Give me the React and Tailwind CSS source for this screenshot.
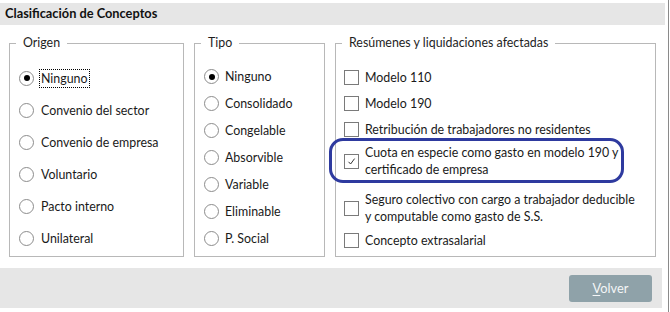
import React from 'react';

const origen = ['Ninguno', 'Convenio del sector', 'Convenio de empresa', 'Voluntario', 'Pacto interno', 'Unilateral'];
const tipo = ['Ninguno', 'Consolidado', 'Congelable', 'Absorvible', 'Variable', 'Eliminable', 'P. Social'];

function Radio({ checked }) {
  return (
    <span className="w-[15px] h-[15px] rounded-full border border-[#8c8c8c] bg-white flex items-center justify-center shrink-0">
      {checked && <span className="w-[6px] h-[6px] rounded-full bg-black" />}
    </span>
  );
}

function Check({ checked }) {
  return (
    <span className="w-[15px] h-[15px] border border-[#7a7a7a] bg-white flex items-center justify-center shrink-0">
      {checked && (
        <svg width="9" height="9" viewBox="0 0 9 9">
          <path d="M1.5 4.8 L3.6 7 L7.6 1.6" fill="none" stroke="#333" strokeWidth="1" />
        </svg>
      )}
    </span>
  );
}

function Group({ title, width, children }) {
  return (
    <div className={`${width} h-[214px] border border-[#b8b8b8] shrink-0`}>
      <div className="-mt-[10px] ml-[6px] px-[7px] bg-white w-fit leading-[17px] text-[#1e1e1e] whitespace-nowrap">{title}</div>
      {children}
    </div>
  );
}

export default function App() {
  return (
    <div className="w-[670px] h-[312px] bg-white font-['Lato',sans-serif] text-[12.4px] text-[#1a1a1a] relative whitespace-nowrap">
      <div className="w-[669px] h-full border-r border-[#8a8a8a] flex flex-col">
        <div className="pt-[3px] pr-[3px]">
          <div className="h-[22px] bg-[#e6e6e6] flex items-center pl-[5px] font-bold text-[12.8px] text-[#111]">
            Clasificación de Conceptos
          </div>
        </div>

        <div className="flex gap-[10px] pl-[9px] pt-[18px] h-[243px]">
          <Group title="Origen" width="w-[175px]">
            <div className="pt-[11px] pl-[9px]">
              {origen.map((o, i) => (
                <div key={o} className="h-[32px] flex items-center gap-[6px] leading-[17px]">
                  <Radio checked={i === 0} />
                  <span className={i === 0 ? 'outline outline-1 outline-dotted outline-black px-[1px]' : 'px-[1px]'}>{o}</span>
                </div>
              ))}
            </div>
          </Group>

          <Group title="Tipo" width="w-[131px]">
            <div className="pt-[12px] pl-[9px]">
              {tipo.map((t, i) => (
                <div key={t} className="h-[27px] flex items-center gap-[6px] leading-[17px]">
                  <Radio checked={i === 0} />
                  <span>{t}</span>
                </div>
              ))}
            </div>
          </Group>

          <Group title="Resúmenes y liquidaciones afectadas" width="w-[321px]">
            <div className="pt-[18px] pl-[8px] flex flex-col gap-[9px] leading-[17px]">
              <div className="flex items-center gap-[6px]"><Check /><span>Modelo 110</span></div>
              <div className="flex items-center gap-[6px]"><Check /><span>Modelo 190</span></div>
              <div className="flex items-center gap-[6px]"><Check /><span>Retribución de trabajadores no residentes</span></div>
              <div className="flex items-center gap-[6px] -mt-[3px]"><Check checked /><span>Cuota en especie como gasto en modelo 190 y<br />certificado de empresa</span></div>
              <div className="flex items-center gap-[6px] mt-[4px]"><Check /><span>Seguro colectivo con cargo a trabajador deducible<br />y computable como gasto de S.S.</span></div>
              <div className="flex items-center gap-[6px] -mt-[2px]"><Check /><span>Concepto extrasalarial</span></div>
            </div>
          </Group>
        </div>

        <div className="h-[40px] mr-[6px] bg-[#e6e6e6] flex items-center justify-end pr-[10px] pt-[1px]">
          <button className="w-[83px] h-[27px] rounded-[3px] bg-[#8fa2a9] text-[#f4f6f7] text-[12.8px] leading-none">
            <span className="underline underline-offset-2">V</span>olver
          </button>
        </div>
      </div>

      <div className="absolute left-[329px] top-[138px] w-[295px] h-[45px] rounded-[14px] border-[3px] border-[#2e3a9f] pointer-events-none" />
    </div>
  );
}
